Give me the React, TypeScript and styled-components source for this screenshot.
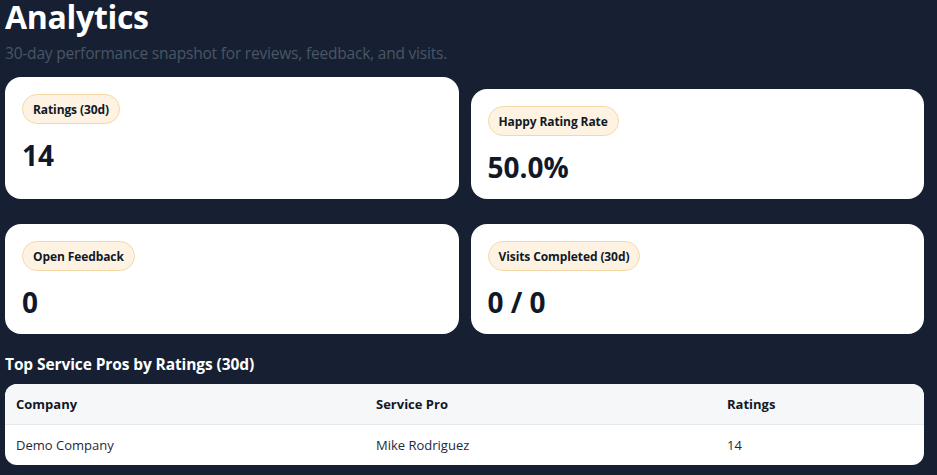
import React, { ReactElement } from "react";
import styled, { createGlobalStyle } from "styled-components";

const GlobalStyle = createGlobalStyle`
    html, body {
        margin: 0;
        padding: 0;
        background: #162032;
    }
    body {
        font-family: "Open Sans", "Noto Sans", sans-serif;
        color: #111827;
    }
`;

const Page = styled.main`
    padding: 0 13px 10px 5px;
`;

const Title = styled.h1`
    margin: 0;
    font-size: 32px;
    font-weight: 700;
    line-height: 34px;
    color: #ffffff;
    letter-spacing: -0.3px;
`;

const Subtitle = styled.p`
    margin: 8px 0 0;
    font-size: 15.5px;
    line-height: 22px;
    color: #4b5565;
    letter-spacing: -0.2px;
`;

const StatGrid = styled.div`
    display: grid;
    grid-template-columns: 1fr 1fr;
    column-gap: 12px;
    row-gap: 25px;
    align-items: end;
    margin-top: 13px;
`;

const StatCard = styled.section<{ $tall?: boolean }>`
    background: #ffffff;
    border-radius: 16px;
    padding: 17px 17px 0;
    height: ${({ $tall }) => ($tall ? "122px" : "110px")};
    box-sizing: border-box;
`;

const Pill = styled.span`
    display: inline-flex;
    align-items: center;
    height: 30px;
    padding: 0 10px;
    box-sizing: border-box;
    border-radius: 999px;
    background: #fef3e2;
    border: 1px solid #f4d9a6;
    font-size: 12px;
    font-weight: 700;
    color: #111827;
    letter-spacing: -0.1px;
`;

const Value = styled.div`
    margin-top: 14px;
    font-size: 28px;
    font-weight: 700;
    line-height: 34px;
    color: #111827;
`;

const SectionTitle = styled.h2`
    margin: 19px 0 0;
    font-size: 15.5px;
    font-weight: 700;
    line-height: 22px;
    color: #ffffff;
    letter-spacing: -0.1px;
`;

const TableCard = styled.div`
    margin-top: 9px;
    background: #ffffff;
    border-radius: 12px;
    overflow: hidden;
`;

const Table = styled.table`
    width: 100%;
    border-collapse: collapse;
    table-layout: fixed;
    font-size: 13px;
`;

const HeadCell = styled.th<{ $width?: string }>`
    text-align: left;
    font-weight: 700;
    height: 40px;
    padding: 0 11px;
    background: #f6f7f9;
    border-bottom: 1px solid #e6e8ec;
    width: ${({ $width }) => $width || "auto"};
`;

const Cell = styled.td`
    height: 40px;
    padding: 0 11px;
    color: #1f2937;
`;

const stats = [
    { label: "Ratings (30d)", value: "14", tall: true },
    { label: "Happy Rating Rate", value: "50.0%" },
    { label: "Open Feedback", value: "0" },
    { label: "Visits Completed (30d)", value: "0 / 0" },
];

const App = (): ReactElement => {
    return (
        <>
            <GlobalStyle />
            <Page>
                <Title>Analytics</Title>
                <Subtitle>30-day performance snapshot for reviews, feedback, and visits.</Subtitle>
                <StatGrid>
                    {stats.map((s) => (
                        <StatCard key={s.label} $tall={s.tall}>
                            <Pill>{s.label}</Pill>
                            <Value>{s.value}</Value>
                        </StatCard>
                    ))}
                </StatGrid>
                <SectionTitle>Top Service Pros by Ratings (30d)</SectionTitle>
                <TableCard>
                    <Table>
                        <thead>
                            <tr>
                                <HeadCell $width="338px">Company</HeadCell>
                                <HeadCell $width="329px">Service Pro</HeadCell>
                                <HeadCell>Ratings</HeadCell>
                            </tr>
                        </thead>
                        <tbody>
                            <tr>
                                <Cell>Demo Company</Cell>
                                <Cell>Mike Rodriguez</Cell>
                                <Cell>14</Cell>
                            </tr>
                        </tbody>
                    </Table>
                </TableCard>
            </Page>
        </>
    );
};

export default App;
